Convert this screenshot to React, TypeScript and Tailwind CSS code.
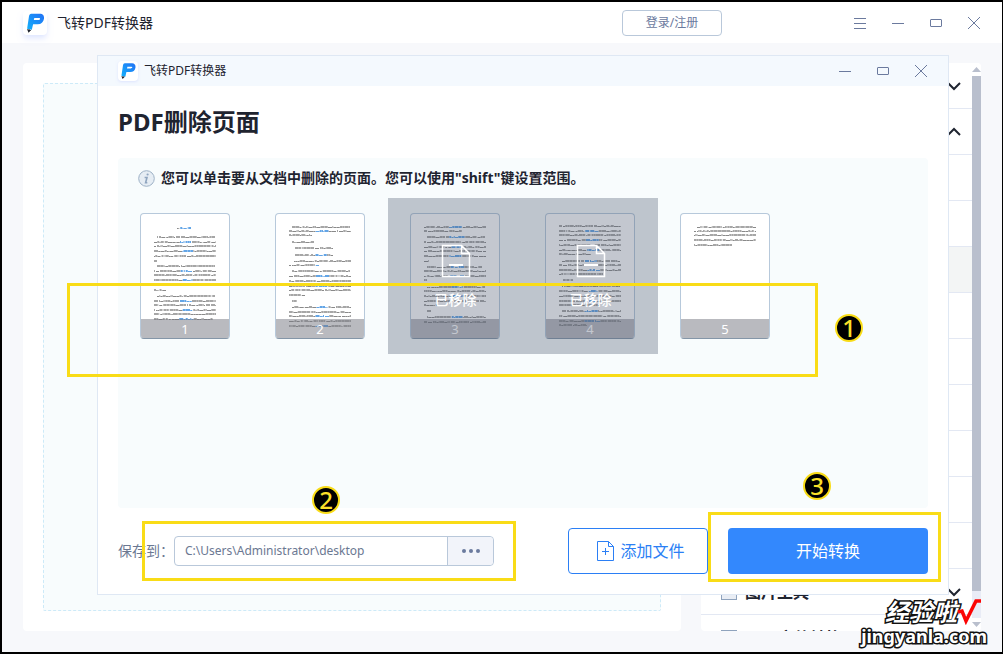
import type { ReactNode } from 'react'

const INK = '#1f2430'
const ICON = '#6b7a9e'

// Text line of a page preview: [y, start, end]
type TextLine = [number, number, number]

interface PageItem {
  number: number
  removed: boolean
  color: boolean
  lines: TextLine[]
}

const PAGES: PageItem[] = [
  {
    number: 1,
    removed: false,
    color: true,
    lines: [
      [15, 37, 51], [24, 17, 75], [29, 14, 76], [33, 14, 76], [38, 14, 76], [43, 14, 76], [48, 14, 17],
      [53, 17, 75], [58, 14, 76], [62, 14, 76], [67, 14, 76], [72, 14, 76], [77, 14, 27],
      [83, 17, 75], [88, 14, 76], [92, 14, 76], [97, 14, 76], [101, 14, 76], [106, 14, 73],
    ],
  },
  {
    number: 2,
    removed: false,
    color: true,
    lines: [
      [14, 17, 75], [18, 14, 76], [22, 14, 37], [29, 17, 39], [35, 20, 58], [42, 20, 58], [48, 19, 76],
      [52, 14, 44], [58, 17, 75], [63, 14, 76], [68, 14, 76], [73, 14, 76], [77, 14, 76], [82, 14, 30],
      [88, 17, 22], [94, 17, 76], [99, 14, 76], [103, 14, 76], [108, 14, 76], [113, 14, 76],
    ],
  },
  {
    number: 3,
    removed: true,
    color: true,
    lines: [
      [14, 14, 76], [18, 14, 52], [24, 17, 75], [29, 14, 76], [34, 14, 76], [38, 14, 76], [43, 14, 76],
      [48, 14, 19], [54, 17, 72], [58, 14, 76], [63, 14, 76], [67, 14, 17], [74, 17, 75], [78, 14, 76],
      [83, 14, 76], [88, 14, 76], [92, 14, 28], [98, 17, 22], [104, 17, 76], [109, 14, 76],
    ],
  },
  {
    number: 4,
    removed: true,
    color: true,
    lines: [
      [13, 14, 76], [18, 14, 76], [22, 14, 76], [27, 14, 76], [32, 14, 76], [37, 14, 76], [41, 14, 46],
      [48, 17, 75], [52, 14, 76], [57, 14, 76], [61, 14, 58], [67, 18, 28], [73, 17, 75], [78, 14, 76],
      [83, 14, 76], [88, 14, 76], [92, 14, 54], [98, 17, 76], [103, 14, 76], [108, 14, 76], [112, 14, 42],
    ],
  },
  {
    number: 5,
    removed: false,
    color: false,
    lines: [[14, 17, 76], [18, 14, 76], [22, 14, 76], [27, 14, 76], [32, 14, 52]],
  },
]

interface ToolRow {
  label?: string
  chevron?: 'down' | 'up'
  active?: boolean
}

const TOOL_ROWS: ToolRow[] = [
  { chevron: 'down' },
  { chevron: 'up' },
  {},
  {},
  { active: true },
  {},
  {},
  {},
  {},
  {},
  {},
  { label: '图片工具', chevron: 'down' },
  { label: 'CAD文件转换' },
]

function Logo({ className }: { className: string }) {
  return (
    <svg viewBox="0 0 24 24" className={`rounded bg-white ${className}`} aria-hidden="true">
      <defs>
        <linearGradient id="logo-blue" x1="0" y1="1" x2="1" y2="0">
          <stop offset="0" stopColor="#12b0fb" />
          <stop offset="1" stopColor="#2271f5" />
        </linearGradient>
      </defs>
      <path
        d="M8.2 2.8h8.600c2.900 0 4.700 2 4.200 4.900-.6 3.500-2.800 5.500-6.300 5.500h-4.600l-1.300 5.600-4.700-1.100L6 5.200c.3-1.500 1-2.400 2.200-2.400zM11.300 7l-.5 2h4.500c1 0 1.600-.3 1.800-1.100.1-.6-.2-.9-.9-.9z"
        fill="url(#logo-blue)"
        fillRule="evenodd"
      />
      <path d="M4 17.900l1.300.6 1-.3.900.7 1.300-.2-3 3z" fill={INK} />
    </svg>
  )
}

function WindowButton({ label, children }: { label: string; children: ReactNode }) {
  return (
    <button aria-label={label} className="flex h-7 w-[38px] items-center justify-center">
      <svg width="14" height="14" viewBox="0 0 14 14" fill="none" stroke={ICON} strokeWidth="1">
        {children}
      </svg>
    </button>
  )
}

function WindowControls() {
  return (
    <>
      <WindowButton label="最小化">
        <path d="M1 7.500h12" />
      </WindowButton>
      <WindowButton label="最大化">
        <rect x="1.500" y="3.500" width="11" height="7" rx=".5" />
      </WindowButton>
      <WindowButton label="关闭">
        <path d="M1 1l12 12M13 1L1 13" />
      </WindowButton>
    </>
  )
}

function Chevron({ direction }: { direction: 'down' | 'up' }) {
  return (
    <svg width="14" height="10" viewBox="0 0 14 10" fill="none" stroke={INK} strokeWidth="2">
      <path d={direction === 'down' ? 'M1 2l6 6 6-6' : 'M1 8l6-6 6 6'} />
    </svg>
  )
}

// Splits a line of preview text into small word marks of varying weight
function lineMarks([y, start, end]: TextLine, row: number, color: boolean) {
  const marks: ReactNode[] = []
  let x = start
  let seed = row * 37 + y * 11 + end
  while (x < end) {
    seed = (seed * 73 + 41) % 997
    const width = Math.min(1 + (seed % 4), end - x)
    const blue = color && (Math.floor(x / 13) + row * 3) % 6 === 0
    const tall = seed % 3 !== 0
    marks.push(
      <rect
        key={x}
        x={x}
        y={tall ? y - 1 : y}
        width={width}
        height={tall ? 2 : 1}
        fill={blue ? '#2f87dd' : '#3a3a3a'}
        opacity={blue ? 0.75 : tall ? 0.45 : 0.6}
      />,
    )
    x += width + (seed % 7 === 0 ? 1 : 0.25)
  }
  return marks
}

function PageThumb({ page }: { page: PageItem }) {
  return (
    <li className="relative w-[135px] px-[22px] py-[15px]">
      <button
        aria-label={`第${page.number}页`}
        aria-pressed={page.removed}
        className="relative block h-[126px] w-[90px] overflow-hidden rounded border border-[#b7c9db] border-b-[#8496a8] bg-white"
      >
        <svg viewBox="1 1 88 124" className="block h-full w-full">
          {page.lines.map((line, i) => (
            <g key={i}>{lineMarks(line, i + page.number, page.color)}</g>
          ))}
        </svg>
        <span className="absolute inset-x-0 bottom-0 h-[19px] bg-[#73757f]/50 text-center text-[13px] leading-5 text-white">
          {page.number}
        </span>
      </button>
      {page.removed && (
        <div className="pointer-events-none absolute inset-0 flex flex-col items-center bg-[#49556e]/33 pt-[46px] text-white">
          <svg width="30" height="34" viewBox="0 0 30 34" fill="none" stroke="currentColor" strokeWidth="1.500">
            <path d="M1.500 1.500h19l8 8v23h-27zM20.500 1.500v8h8" />
            <path d="M8 21h14" strokeWidth="2" />
          </svg>
          <span className="mt-3 text-sm leading-5 font-medium">已移除</span>
        </div>
      )}
    </li>
  )
}

function ToolList() {
  return (
    <aside className="flex w-[280px] shrink-0 overflow-hidden rounded bg-white">
      <ul className="min-w-0 flex-1">
        {TOOL_ROWS.map((row, i) => (
          <li
            key={i}
            className={`flex h-[46px] items-center gap-2 border-b border-[#e3e8f3] pr-[11px] pl-5 ${
              row.active ? 'bg-[#f3f5f5]' : ''
            }`}
          >
            {row.label && (
              <>
                <span className="size-4 border border-[#8fa3bd] bg-[#e9edf4]" />
                <span className="text-base font-bold text-[#1f2430]">{row.label}</span>
              </>
            )}
            {row.chevron && (
              <span className="ml-auto">
                <Chevron direction={row.chevron} />
              </span>
            )}
          </li>
        ))}
      </ul>
      <div className="flex w-[9px] flex-col bg-white">
        <svg width="9" height="13" viewBox="0 0 9 13" fill="#b9bfcd">
          <path d="M0 9l4.500-5L9 9z" />
        </svg>
        <div className="flex-1 bg-[#b9bfcd]" />
        <div className="h-[27px] bg-[#e9ecf6]" />
        <svg width="9" height="13" viewBox="0 0 9 13" fill="#b9bfcd">
          <path d="M0 4l4.500 5L9 4z" />
        </svg>
      </div>
    </aside>
  )
}

function DeletePagesDialog() {
  return (
    <section
      role="dialog"
      aria-label="PDF删除页面"
      className="absolute top-[55px] right-[54px] bottom-[59px] left-[97px] flex flex-col border border-[#dfe8f4] bg-white"
    >
      <header className="flex h-[30px] shrink-0 items-center bg-[#f4f9fe] pr-2 pl-5">
        <Logo className="size-5 shadow-sm shadow-indigo-100" />
        <span className="ml-1.5 flex-1 text-xs">飞转PDF转换器</span>
        <WindowControls />
      </header>

      <h1 className="flex h-[72px] shrink-0 items-center px-5 text-2xl font-bold">PDF删除页面</h1>

      <div className="mx-5 min-h-0 flex-1 rounded bg-[#f8fcfd]">
        <p className="flex h-10 items-center gap-1.5 px-5 text-sm font-bold">
          <svg width="17" height="17" viewBox="0 0 17 17" className="shrink-0" aria-hidden="true">
            <circle cx="8.500" cy="8.500" r="7.800" fill="#e6edf4" stroke="#9db1c6" />
            <circle cx="9.600" cy="4.500" r="1.100" fill="#8fa5bf" />
            <path d="M6.600 7.500h2.400l-1.400 5.300h1.700" fill="none" stroke="#8fa5bf" strokeWidth="1.600" />
          </svg>
          您可以单击要从文档中删除的页面。您可以使用"shift"键设置范围。
        </p>
        <ul className="flex flex-wrap">
          {PAGES.map((page) => (
            <PageThumb key={page.number} page={page} />
          ))}
        </ul>
      </div>

      <footer className="flex shrink-0 items-center p-5">
        <label htmlFor="save-path" className="w-14 shrink-0 text-sm text-[#6b7892]">
          保存到：
        </label>
        <div className="flex h-[30px] w-80 rounded border border-[#b9c8da]">
          <input
            id="save-path"
            defaultValue="C:\Users\Administrator\desktop"
            className="min-w-0 flex-1 bg-transparent px-2.5 text-xs text-[#6b7892] outline-none"
          />
          <button
            aria-label="浏览"
            className="flex w-[46px] items-center justify-center rounded-r border-l border-[#b9c8da] bg-[#f2f4fa]"
          >
            <svg width="18" height="4" viewBox="0 0 18 4" fill={ICON}>
              <circle cx="2" cy="2" r="2" />
              <circle cx="9" cy="2" r="2" />
              <circle cx="16" cy="2" r="2" />
            </svg>
          </button>
        </div>
        <button className="ml-auto flex h-[46px] w-[140px] items-center justify-center gap-1.5 rounded border border-[#2b7ff5] pl-1.5 text-base text-[#2b7ff5]">
          <svg width="17" height="20" viewBox="0 0 17 20" fill="none" stroke="currentColor">
            <path d="M.5.5h11l5 5v14H.5zM11.500.5v5h5M8.500 7v7M5 10.500h7" />
          </svg>
          添加文件
        </button>
        <button className="ml-5 h-[46px] w-[200px] rounded bg-[#3388fd] text-base text-white">开始转换</button>
      </footer>
    </section>
  )
}

function StepMarker({ step, className }: { step: number; className: string }) {
  return (
    <span
      className={`absolute flex size-7 items-center justify-center rounded-full border-2 border-[#f9dc17] bg-black text-2xl leading-none font-medium text-[#fbe02a] ${className}`}
    >
      {step}
    </span>
  )
}

function Guides() {
  return (
    <div className="pointer-events-none">
      <div className="absolute top-[283px] right-[185px] left-[67px] h-[94px] border-3 border-[#f9dc17]" />
      <div className="absolute bottom-[73px] left-[142px] h-[60px] w-[374px] border-3 border-[#f9dc17]" />
      <div className="absolute right-[62px] bottom-[72px] h-[70px] w-[233px] border-3 border-[#f9dc17]" />
      <StepMarker step={1} className="top-[314px] right-[140px]" />
      <StepMarker step={2} className="bottom-[140px] left-[312px]" />
      <StepMarker step={3} className="right-[172px] bottom-[154px]" />
    </div>
  )
}

function Watermark() {
  return (
    <div className="pointer-events-none absolute right-4 bottom-2 flex flex-col items-end font-bold whitespace-nowrap text-white [paint-order:stroke_fill] [-webkit-text-stroke:3px_#111]">
      <div className="mr-1.5 flex items-center text-2xl leading-7 italic">
        经验啦
        <svg width="24" height="26" viewBox="0 0 24 26" fill="none" stroke="#fb0505" strokeWidth="3.500">
          <path d="M1 13l4-1 4 10L19 2h5" />
        </svg>
      </div>
      <div className="text-lg leading-5">jingyanla.com</div>
    </div>
  )
}

export default function App() {
  return (
    <div className="relative flex h-screen flex-col border-2 border-r border-black bg-[#f7f8fb] font-['Noto_Sans','Noto_Sans_CJK_SC',sans-serif] text-[#1f2430]">
      <header className="flex h-[41px] shrink-0 items-center bg-white pr-[9px] pl-[21px]">
        <Logo className="size-6 shadow-md shadow-indigo-100" />
        <span className="ml-2.5 text-sm">飞转PDF转换器</span>
        <button className="mr-[119px] ml-auto h-[26px] w-[100px] rounded border border-[#b9c8da] text-xs text-[#6b7a9e]">
          登录/注册
        </button>
        <WindowButton label="菜单">
          <path d="M1 2.500h12M1 7.500h12M1 12.500h12" />
        </WindowButton>
        <WindowControls />
      </header>

      <main className="flex min-h-0 flex-1 gap-5 px-[21px] pt-5 pb-[21px]">
        <div className="flex-1 rounded bg-white p-5">
          <div className="h-full rounded-xs border border-dashed border-[#cdeaf8] bg-[#f8fcfd]" />
        </div>
        <ToolList />
      </main>

      {/* Covers the window border too, so offsets start at the outer edge */}
      <div className="absolute -top-0.5 -right-px -bottom-0.5 -left-0.5">
        <DeletePagesDialog />
        <Guides />
        <Watermark />
      </div>
    </div>
  )
}
